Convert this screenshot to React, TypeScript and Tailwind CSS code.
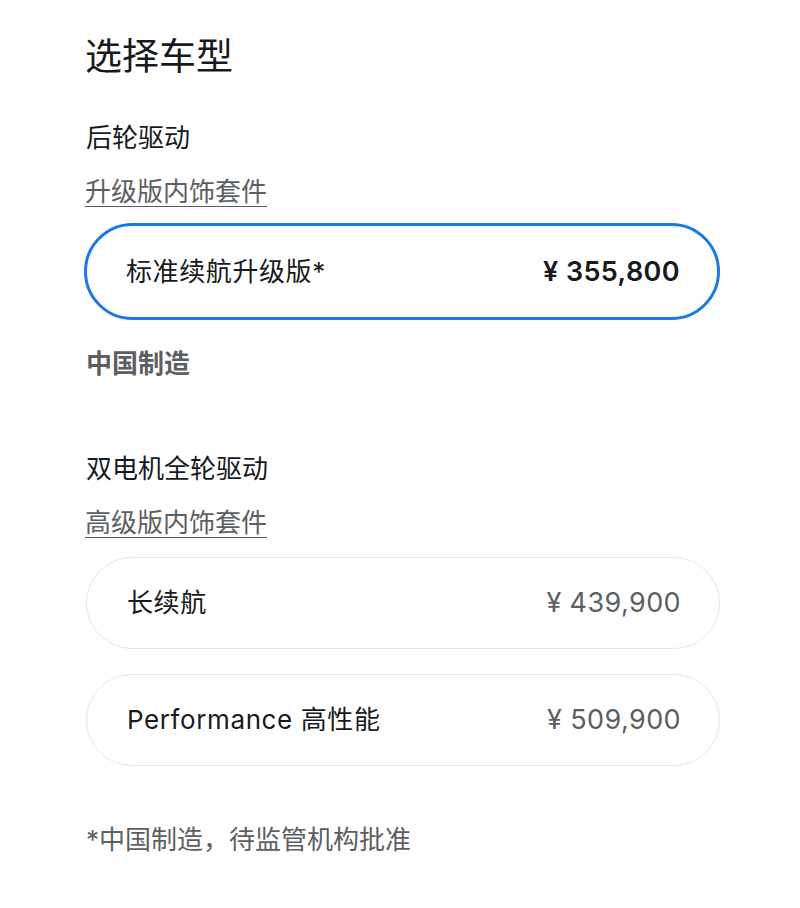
import React from 'react';

const latin = "font-['Inter','Noto_Sans_CJK_SC',sans-serif]";

// Trim option pill
const Option = ({
  name,
  price,
  selected,
}: {
  name: string;
  price: string;
  selected?: boolean;
}) => (
  <div
    className={
      selected
        ? 'flex h-[97px] items-center justify-between rounded-full border-[3px] border-[#1c78e4] pl-[39px] pr-[37px]'
        : 'flex h-[92px] items-center justify-between rounded-full border-[1.5px] border-[#e6e6e6] pl-[40px] pr-[38px]'
    }
  >
    <span className="text-[26px] leading-[36px] tracking-[0.6px] text-[#171a20]">{name}</span>
    <span
      className={
        selected
          ? 'text-[27px] font-semibold leading-[36px] tracking-[0.4px] text-[#171a20]'
          : 'text-[27px] leading-[36px] tracking-[0.4px] text-[#5c5e62]'
      }
    >
      {price}
    </span>
  </div>
);

export default function App() {
  return (
    <div className={`min-h-[908px] bg-white pl-[84px] pt-[35px] ${latin}`}>
      <div className="w-[636px]">
        <h1 className="pl-[1px] text-[37px] font-normal leading-[44px] text-[#171a20]">选择车型</h1>

        {/* Rear wheel drive */}
        <h2 className="mt-[41px] pl-[2px] text-[26px] leading-[36px] text-[#171a20]">后轮驱动</h2>
        <a className="mt-[18px] block pl-[1px] text-[26px] leading-[36px] text-[#5c5e62] underline underline-offset-[5px] decoration-1">
          升级版内饰套件
        </a>
        <div className="mt-[13px]">
          <Option name="标准续航升级版*" price="¥ 355,800" selected />
        </div>
        <p className="mt-[26px] pl-[2px] text-[26px] font-bold leading-[36px] text-[#5c5e62]">中国制造</p>

        {/* Dual motor AWD */}
        <h2 className="mt-[69px] pl-[2px] text-[26px] leading-[36px] text-[#171a20]">双电机全轮驱动</h2>
        <a className="mt-[18px] block pl-[1px] text-[26px] leading-[36px] text-[#5c5e62] underline underline-offset-[5px] decoration-1">
          高级版内饰套件
        </a>
        <div className="mt-[16px] flex flex-col gap-[25px] pl-[2px]">
          <Option name="长续航" price="¥ 439,900" />
          <Option name="Performance 高性能" price="¥ 509,900" />
        </div>

        <p className="mt-[56px] pl-[2px] text-[26px] leading-[36px] text-[#5c5e62]">*中国制造，待监管机构批准</p>
      </div>
    </div>
  );
}
